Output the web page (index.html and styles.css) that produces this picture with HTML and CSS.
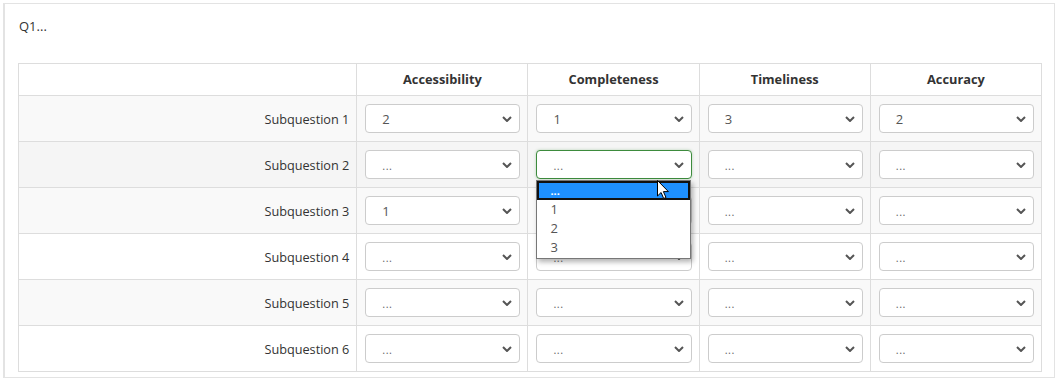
FILE: index.html
```html
<!DOCTYPE html>
<html>
<head>
<meta charset="utf-8">
<link rel="stylesheet" href="styles.css">
</head>
<body>
<div class="panel">
  <div class="question">Q1...</div>
  <table class="grid">
    <colgroup>
      <col class="c-label"><col class="c-ans"><col class="c-ans"><col class="c-ans"><col class="c-ans">
    </colgroup>
    <thead>
      <tr><th></th><th>Accessibility</th><th>Completeness</th><th>Timeliness</th><th>Accuracy</th></tr>
    </thead>
    <tbody>
      <tr class="odd">
        <td class="lbl">Subquestion 1</td>
        <td><div class="sel"><span>2</span><svg class="chev" viewBox="0 0 10 6"><path d="M1 1l4 4 4-4"/></svg></div></td>
        <td><div class="sel"><span>1</span><svg class="chev" viewBox="0 0 10 6"><path d="M1 1l4 4 4-4"/></svg></div></td>
        <td><div class="sel"><span>3</span><svg class="chev" viewBox="0 0 10 6"><path d="M1 1l4 4 4-4"/></svg></div></td>
        <td><div class="sel"><span>2</span><svg class="chev" viewBox="0 0 10 6"><path d="M1 1l4 4 4-4"/></svg></div></td>
      </tr>
      <tr class="hover">
        <td class="lbl">Subquestion 2</td>
        <td><div class="sel"><span class="dots">...</span><svg class="chev" viewBox="0 0 10 6"><path d="M1 1l4 4 4-4"/></svg></div></td>
        <td class="anchor">
          <div class="sel focus"><span class="dots">...</span><svg class="chev" viewBox="0 0 10 6"><path d="M1 1l4 4 4-4"/></svg></div>
          <ul class="dropdown">
            <li class="active">...</li>
            <li>1</li>
            <li>2</li>
            <li>3</li>
          </ul>
          <svg class="cursor" viewBox="0 0 12 19" width="12" height="19"><path d="M0.5 0.5v15.5l3.6-3.5 2.6 6 2.3-1-2.6-5.9h5z" fill="#fff" stroke="#000" stroke-width="1" stroke-linejoin="round"/></svg>
        </td>
        <td><div class="sel"><span class="dots">...</span><svg class="chev" viewBox="0 0 10 6"><path d="M1 1l4 4 4-4"/></svg></div></td>
        <td><div class="sel"><span class="dots">...</span><svg class="chev" viewBox="0 0 10 6"><path d="M1 1l4 4 4-4"/></svg></div></td>
      </tr>
      <tr class="odd">
        <td class="lbl">Subquestion 3</td>
        <td><div class="sel"><span>1</span><svg class="chev" viewBox="0 0 10 6"><path d="M1 1l4 4 4-4"/></svg></div></td>
        <td><div class="sel hidden-under"><span class="dots">...</span><svg class="chev" viewBox="0 0 10 6"><path d="M1 1l4 4 4-4"/></svg></div></td>
        <td><div class="sel"><span class="dots">...</span><svg class="chev" viewBox="0 0 10 6"><path d="M1 1l4 4 4-4"/></svg></div></td>
        <td><div class="sel"><span class="dots">...</span><svg class="chev" viewBox="0 0 10 6"><path d="M1 1l4 4 4-4"/></svg></div></td>
      </tr>
      <tr>
        <td class="lbl">Subquestion 4</td>
        <td><div class="sel"><span class="dots">...</span><svg class="chev" viewBox="0 0 10 6"><path d="M1 1l4 4 4-4"/></svg></div></td>
        <td><div class="sel"><span class="dots">...</span><svg class="chev" viewBox="0 0 10 6"><path d="M1 1l4 4 4-4"/></svg></div></td>
        <td><div class="sel"><span class="dots">...</span><svg class="chev" viewBox="0 0 10 6"><path d="M1 1l4 4 4-4"/></svg></div></td>
        <td><div class="sel"><span class="dots">...</span><svg class="chev" viewBox="0 0 10 6"><path d="M1 1l4 4 4-4"/></svg></div></td>
      </tr>
      <tr class="odd">
        <td class="lbl">Subquestion 5</td>
        <td><div class="sel"><span class="dots">...</span><svg class="chev" viewBox="0 0 10 6"><path d="M1 1l4 4 4-4"/></svg></div></td>
        <td><div class="sel"><span class="dots">...</span><svg class="chev" viewBox="0 0 10 6"><path d="M1 1l4 4 4-4"/></svg></div></td>
        <td><div class="sel"><span class="dots">...</span><svg class="chev" viewBox="0 0 10 6"><path d="M1 1l4 4 4-4"/></svg></div></td>
        <td><div class="sel"><span class="dots">...</span><svg class="chev" viewBox="0 0 10 6"><path d="M1 1l4 4 4-4"/></svg></div></td>
      </tr>
      <tr>
        <td class="lbl">Subquestion 6</td>
        <td><div class="sel"><span class="dots">...</span><svg class="chev" viewBox="0 0 10 6"><path d="M1 1l4 4 4-4"/></svg></div></td>
        <td><div class="sel"><span class="dots">...</span><svg class="chev" viewBox="0 0 10 6"><path d="M1 1l4 4 4-4"/></svg></div></td>
        <td><div class="sel"><span class="dots">...</span><svg class="chev" viewBox="0 0 10 6"><path d="M1 1l4 4 4-4"/></svg></div></td>
        <td><div class="sel"><span class="dots">...</span><svg class="chev" viewBox="0 0 10 6"><path d="M1 1l4 4 4-4"/></svg></div></td>
      </tr>
    </tbody>
  </table>
</div>
</body>
</html>
```
FILE: styles.css
```css
html, body {
  margin: 0;
  padding: 0;
  background: #fff;
}
body {
  font-family: "Open Sans", "Liberation Sans", sans-serif;
  font-size: 13px;
  color: #333;
  padding: 3px 0 0 3px;
}
.panel {
  width: 1052px;
  height: 375px;
  border: 1px solid #e3e3e3;
  border-left-width: 2px;
  box-sizing: border-box;
  padding: 0 0 0 13px;
  position: relative;
}
.question {
  height: 59px;
  box-sizing: border-box;
  padding-top: 13px;
  line-height: 18px;
  padding-left: 1px;
  color: #333;
}
.grid {
  border-collapse: collapse;
  table-layout: fixed;
  width: 1024px;
  border: 1px solid #ddd;
}
.c-label { width: 338px; }
.c-ans { width: 171px; }
.grid th {
  height: 32px;
  padding: 0 0 2px 0;
  border: 1px solid #ddd;
  font-weight: 700;
  font-size: 12.8px;
  color: #333;
  text-align: center;
  vertical-align: middle;
  background: #fff;
  box-sizing: border-box;
}
.grid td {
  height: 46px;
  padding: 0 7px 0 8px;
  border: 1px solid #ddd;
  vertical-align: middle;
  box-sizing: border-box;
}
.grid tr.odd td { background: #f9f9f9; }
.grid tr.hover td { background: #f5f5f5; }
.grid td.lbl {
  text-align: right;
  padding-right: 7px;
  color: #333;
  font-size: 12.7px;
}
.sel {
  height: 29px;
  border: 1px solid #ccc;
  border-radius: 4px;
  background: #fff;
  box-sizing: border-box;
  display: flex;
  align-items: center;
  justify-content: space-between;
  padding: 0 7px 0 16px;
  color: #555;
}
.sel span { line-height: 18px; }
.sel .dots { font-size: 11px; letter-spacing: 0.5px; padding-top: 3px; color: #666; }
.sel.hidden-under .dots { visibility: hidden; }
.sel.focus {
  border-color: #3d8b3d;
  box-shadow: 0 0 3px rgba(61,139,61,0.35);
}
.chev {
  width: 10px;
  height: 6px;
  fill: none;
  stroke: #555;
  stroke-width: 2;
  margin-top: 1px;
}
.anchor { position: relative; }
.dropdown {
  position: absolute;
  left: 8px;
  top: 38px;
  width: 155px;
  margin: 0;
  padding: 0 0 1px 0;
  list-style: none;
  background: #fff;
  border: 1px solid #777;
  box-sizing: border-box;
  box-shadow: 2px 3px 5px rgba(0,0,0,0.3);
  z-index: 5;
}
.dropdown li {
  height: 19px;
  line-height: 19px;
  padding-left: 13px;
  color: #555;
  font-size: 13px;
  box-sizing: border-box;
}
.dropdown li.active {
  background: #1e90ff;
  color: #fff;
  border: 2px solid #111;
  padding-left: 11px;
  line-height: 15px;
  font-size: 11px;
  font-weight: 700;
}
.cursor {
  position: absolute;
  left: 129px;
  top: 38px;
  z-index: 6;
}
```
